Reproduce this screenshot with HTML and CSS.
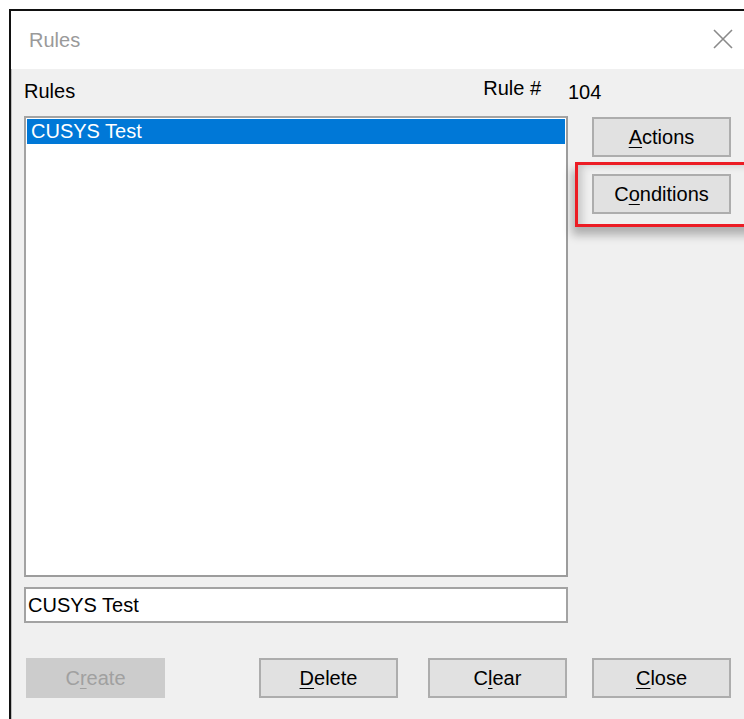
FILE: index.html
```html
<!DOCTYPE html>
<html lang="en">
<head>
<meta charset="utf-8">
<title>Rules</title>
<link rel="stylesheet" href="styles.css">
</head>
<body>
<div class="screen">
  <div class="window">
    <div class="titlebar">
      <span class="title">Rules</span>
      <svg class="close-x" width="20" height="20" viewBox="0 0 20 20" aria-hidden="true">
        <path d="M1 1 L19 19 M19 1 L1 19" stroke="#8a8a8a" stroke-width="1.6" fill="none"/>
      </svg>
    </div>
    <div class="client">
      <div class="header">
        <div class="header-left">
          <span class="label">Rules</span>
          <span class="label rule-no">Rule #</span>
        </div>
        <span class="label rule-value">104</span>
      </div>
      <div class="main">
        <div class="left-col">
          <div class="listbox">
            <div class="item selected">CUSYS Test</div>
          </div>
          <div class="textbox">CUSYS Test</div>
        </div>
        <div class="right-col">
          <div class="btn"><u>A</u>ctions</div>
          <div class="highlight">
            <div class="btn">C<u>o</u>nditions</div>
          </div>
        </div>
      </div>
      <div class="footer">
        <div class="btn btn-disabled btn-create">C<u>r</u>eate</div>
        <div class="btn btn-delete"><u>D</u>elete</div>
        <div class="btn btn-clear">C<u>l</u>ear</div>
        <div class="btn btn-close"><u>C</u>lose</div>
      </div>
    </div>
  </div>
</div>
</body>
</html>
```

FILE: styles.css
```css
html, body {
  margin: 0;
  padding: 0;
  background: #ffffff;
  overflow: hidden;
}

body {
  font-family: "Liberation Sans", Arial, sans-serif;
  font-size: 20px;
  color: #000;
}

.screen {
  width: 744px;
  height: 719px;
  box-sizing: border-box;
  padding: 9px 0 0 9px;
}

.window {
  height: 710px;
  box-sizing: border-box;
  border-top: 2px solid #111;
  border-left: 2px solid #111;
  display: flex;
  flex-direction: column;
  overflow: hidden;
}

/* caption bar */
.titlebar {
  height: 58px;
  flex: none;
  background: #fff;
  display: flex;
  align-items: center;
  justify-content: space-between;
  padding: 0 11px 0 18px;
  border-bottom: 0;
}

.title {
  color: #9a9a9a;
  line-height: 24px;
}

.close-x {
  display: block;
  margin-top: -2px;
}

/* dialog client area */
.client {
  flex: 1;
  background: #f0f0f0;
  padding: 0 0 0 13px;
  box-shadow: inset 1px 0 0 #bdbdbd;
}

.header {
  display: flex;
  align-items: flex-start;
  height: 47px;
  box-sizing: border-box;
  padding-top: 10px;
}

.header-left {
  width: 544px;
  display: flex;
  justify-content: space-between;
  padding-right: 27px;
  box-sizing: border-box;
}

.label {
  line-height: 24px;
}

.rule-no {
  margin-top: -3px;
}

.rule-value {
  margin-top: 1px;
}

.main {
  display: flex;
  align-items: flex-start;
}

.left-col {
  width: 544px;
  display: flex;
  flex-direction: column;
}

.listbox {
  height: 461px;
  box-sizing: border-box;
  background: #fff;
  border: 2px solid #a3a3a3;
  border-right-color: #9c9c9c;
  border-bottom-color: #9c9c9c;
  padding: 1px;
}

.item {
  height: 25px;
  line-height: 25px;
  padding-left: 4px;
  white-space: nowrap;
}

.item.selected {
  background: #0078d7;
  color: #fff;
}

.textbox {
  margin-top: 10px;
  height: 36px;
  box-sizing: border-box;
  background: #fff;
  border: 2px solid #a3a3a3;
  padding-left: 2px;
  display: flex;
  align-items: center;
}

.right-col {
  margin-left: 24px;
  width: 139px;
  padding-top: 1px;
}

/* push buttons */
.btn {
  width: 139px;
  height: 40px;
  box-sizing: border-box;
  background: #e1e1e1;
  border: 2px solid #adadad;
  display: flex;
  align-items: center;
  justify-content: center;
  line-height: 24px;
  white-space: nowrap;
}

.btn u {
  text-decoration-thickness: 1px;
  text-underline-offset: 3px;
}

/* red callout around the Conditions button */
.highlight {
  margin-top: 5px;
  margin-left: -17px;
  margin-right: -60px;
  border: 3px solid #ec1c24;
  padding: 9px 0 10px 14px;
  box-shadow: -3px 8px 9px rgba(0, 0, 0, 0.28), inset 8px 4px 8px -4px rgba(0, 0, 0, 0.18);
}

.footer {
  display: flex;
  margin-top: 35px;
}

.btn-disabled {
  background: #cccccc;
  border-color: #cccccc;
  color: #a0a0a0;
}

.btn-create { margin-left: 2px; }
.btn-delete { margin-left: 94px; }
.btn-clear  { margin-left: 30px; }
.btn-close  { margin-left: 25px; }
```
